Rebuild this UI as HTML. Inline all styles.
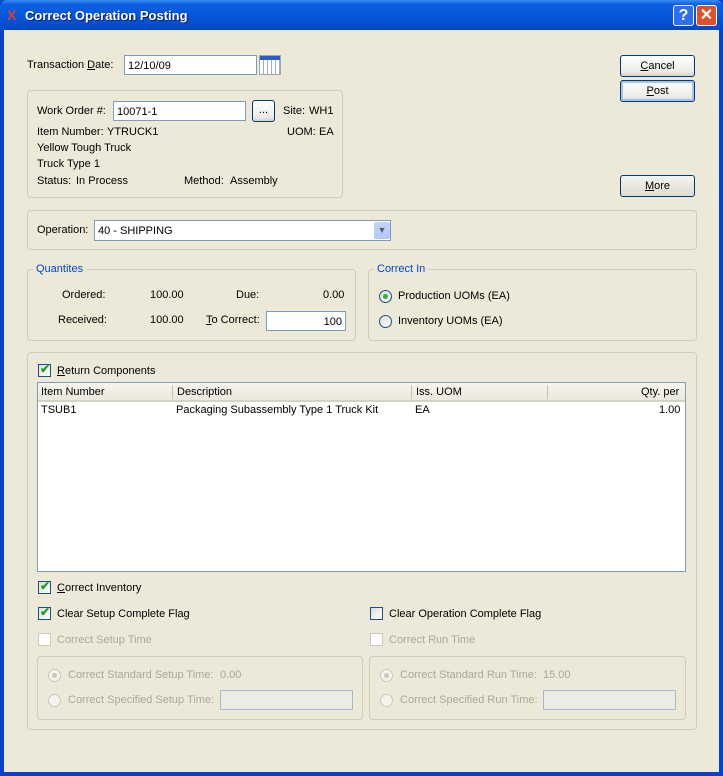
<!DOCTYPE html>
<html><head><style>
*{box-sizing:border-box;margin:0;padding:0}
body{width:723px;height:776px;background:#0842c8;font-family:"Liberation Sans",sans-serif;font-size:11px;color:#000;position:relative;overflow:hidden}
.a{position:absolute;white-space:nowrap}
#title{left:0;top:0;width:723px;height:30px;background:linear-gradient(#3c8cf5 0,#0a5fe0 15%,#0554d8 60%,#0447c4 100%);border-radius:7px 7px 0 0}
#body{left:4px;top:30px;width:715px;height:742px;background:#ece9d8}
.g{position:absolute;border:1px solid #d0cdbc;border-radius:4px}
.in{position:absolute;background:#fff;border:1px solid #7f9db9;padding:4px 3px 0;font-size:11px}
.btn{position:absolute;border:1px solid #003c74;border-radius:3px;background:linear-gradient(#fff,#ecebe6 80%,#d6d0c5);text-align:center;line-height:20px}
.cb{position:absolute;width:13px;height:13px;border:1px solid #1c5180;background:linear-gradient(135deg,#dcdcd6,#fff)}
.cb.d{border-color:#cac8bb;background:#fff}
.ck{position:absolute;left:1px;top:-3px;color:#21a121;font-size:12px;font-weight:bold}
.rb{position:absolute;width:13px;height:13px;border:1px solid #1c5180;border-radius:50%;background:linear-gradient(135deg,#dcdcd6,#fff)}
.rb.d{border-color:#cac8bb;background:#f4f3ee}
.dot{position:absolute;left:3px;top:3px;width:5px;height:5px;border-radius:50%;background:#2fb52f}
.dis{color:#aca899}
.blue{color:#0046d5}
u{text-decoration:underline}
</style></head><body>
<div id="title" class="a"></div>
<div class="a" style="left:7px;top:7px;color:#e0402a;font-weight:bold;font-size:14px">X</div>
<div class="a" style="left:25px;top:8px;color:#fff;font-weight:bold;font-size:13px;text-shadow:1px 1px #0a1e6e">Correct Operation Posting</div>
<div class="a" style="left:673px;top:5px;width:21px;height:21px;border:1px solid #fff;border-radius:3px;background:#2e6ef0;color:#fff;font-weight:bold;font-size:16px;text-align:center;line-height:19px">?</div>
<div class="a" style="left:696px;top:5px;width:21px;height:21px;border:1px solid #fff;border-radius:3px;background:#e0502a;color:#fff;font-weight:bold;font-size:16px;text-align:center;line-height:19px">✕</div>
<div id="body" class="a"></div>

<div class="a" style="left:27px;top:59px">Transaction <u>D</u>ate:</div>
<div class="in" style="left:124px;top:55px;width:133px;height:20px">12/10/09</div>
<div class="a" style="left:259px;top:55px;width:22px;height:20px;border:1px solid #9aa;background:repeating-linear-gradient(90deg,#fff 0 3px,#aab 3px 4px),#fff"><div style="height:4px;background:#2a5bd0"></div></div>

<div class="g" style="left:27px;top:90px;width:316px;height:108px"></div>
<div class="a" style="left:37px;top:105px">Work Order #:</div>
<div class="in" style="left:113px;top:101px;width:133px;height:20px">10071-1</div>
<div class="btn" style="left:252px;top:100px;width:23px;height:22px;line-height:18px">...</div>
<div class="a" style="left:283px;top:105px">Site:</div><div class="a" style="left:309px;top:105px">WH1</div>
<div class="a" style="left:37px;top:126px">Item Number:</div><div class="a" style="left:107px;top:126px">YTRUCK1</div>
<div class="a" style="left:287px;top:126px">UOM:</div><div class="a" style="left:319px;top:126px">EA</div>
<div class="a" style="left:37px;top:142px">Yellow Tough Truck</div>
<div class="a" style="left:37px;top:158px">Truck Type 1</div>
<div class="a" style="left:37px;top:175px">Status:</div><div class="a" style="left:76px;top:175px">In Process</div>
<div class="a" style="left:184px;top:175px">Method:</div><div class="a" style="left:230px;top:175px">Assembly</div>

<div class="btn" style="left:620px;top:55px;width:75px;height:22px"><u>C</u>ancel</div>
<div class="btn" style="left:620px;top:80px;width:75px;height:22px;box-shadow:inset 0 0 0 2px #a8c4f0"><u>P</u>ost</div>
<div class="btn" style="left:620px;top:175px;width:75px;height:22px;background:linear-gradient(#f4f3ee,#e0ddd0)"><u>M</u>ore</div>

<div class="g" style="left:27px;top:210px;width:670px;height:40px"></div>
<div class="a" style="left:37px;top:224px">Operation:</div>
<div class="in" style="left:94px;top:220px;width:297px;height:21px">40 - SHIPPING</div>
<div class="a" style="left:374px;top:222px;width:16px;height:17px;border-radius:2px;background:linear-gradient(#c5d5fb,#b2c8f5);color:#4d6185;font-size:9px;text-align:center;line-height:17px">▼</div>

<div class="g" style="left:27px;top:269px;width:329px;height:72px"></div>
<div class="a blue" style="left:33px;top:263px;background:#ece9d8;padding:0 3px">Quantites</div>
<div class="a" style="left:62px;top:289px">Ordered:</div><div class="a" style="left:150px;top:289px">100.00</div>
<div class="a" style="left:236px;top:289px">Due:</div><div class="a" style="left:323px;top:289px">0.00</div>
<div class="a" style="left:58px;top:314px">Received:</div><div class="a" style="left:150px;top:314px">100.00</div>
<div class="a" style="left:206px;top:314px"><u>T</u>o Correct:</div>
<div class="in" style="left:266px;top:311px;width:80px;height:20px;text-align:right">100</div>

<div class="g" style="left:368px;top:269px;width:329px;height:72px"></div>
<div class="a blue" style="left:374px;top:263px;background:#ece9d8;padding:0 3px">Correct In</div>
<div class="rb" style="left:379px;top:290px"><div class="dot"></div></div><div class="a" style="left:398px;top:290px">Production UOMs (EA)</div>
<div class="rb" style="left:379px;top:315px"></div><div class="a" style="left:398px;top:315px">Inventory UOMs (EA)</div>

<div class="g" style="left:27px;top:352px;width:670px;height:378px"></div>
<div class="cb" style="left:38px;top:364px"><span class="ck">✔</span></div><div class="a" style="left:57px;top:365px"><u>R</u>eturn Components</div>
<div class="a" style="left:37px;top:382px;width:649px;height:190px;border:1px solid #7f9db9;background:#fff"></div>
<div class="a" style="left:38px;top:383px;width:647px;height:19px;background:linear-gradient(#f6f5ef,#ebe9dc);border-bottom:2px solid #d6d2c2"></div>
<div class="a" style="left:172px;top:385px;width:1px;height:14px;background:#c7c5b2"></div>
<div class="a" style="left:411px;top:385px;width:1px;height:14px;background:#c7c5b2"></div>
<div class="a" style="left:547px;top:385px;width:1px;height:14px;background:#c7c5b2"></div>
<div class="a" style="left:41px;top:386px">Item Number</div>
<div class="a" style="left:177px;top:386px">Description</div>
<div class="a" style="left:416px;top:386px">Iss. UOM</div>
<div class="a" style="left:641px;top:386px">Qty. per</div>
<div class="a" style="left:41px;top:404px">TSUB1</div>
<div class="a" style="left:176px;top:404px">Packaging Subassembly Type 1 Truck Kit</div>
<div class="a" style="left:415px;top:404px">EA</div>
<div class="a" style="left:659px;top:404px">1.00</div>

<div class="cb" style="left:38px;top:581px"><span class="ck">✔</span></div><div class="a" style="left:57px;top:582px"><u>C</u>orrect Inventory</div>
<div class="cb" style="left:38px;top:607px"><span class="ck">✔</span></div><div class="a" style="left:57px;top:608px">Clear Setup Complete Flag</div>
<div class="cb" style="left:370px;top:607px"></div><div class="a" style="left:389px;top:608px">Clear Operation Complete Flag</div>
<div class="cb d" style="left:38px;top:633px"></div><div class="a dis" style="left:57px;top:634px">Correct Setup Time</div>
<div class="cb d" style="left:370px;top:633px"></div><div class="a dis" style="left:389px;top:634px">Correct Run Time</div>

<div class="g" style="left:37px;top:656px;width:326px;height:64px"></div>
<div class="rb d" style="left:48px;top:669px"><div class="dot" style="background:#cac8bb"></div></div><div class="a dis" style="left:68px;top:669px">Correct Standard Setup Time:</div><div class="a dis" style="left:220px;top:669px">0.00</div>
<div class="rb d" style="left:48px;top:694px"></div><div class="a dis" style="left:68px;top:694px">Correct Specified Setup Time:</div>
<div class="in" style="left:220px;top:690px;width:133px;height:20px;background:#ecebe5;border-color:#a8b8cc"></div>

<div class="g" style="left:369px;top:656px;width:317px;height:64px"></div>
<div class="rb d" style="left:380px;top:669px"><div class="dot" style="background:#cac8bb"></div></div><div class="a dis" style="left:400px;top:669px">Correct Standard Run Time:</div><div class="a dis" style="left:543px;top:669px">15.00</div>
<div class="rb d" style="left:380px;top:694px"></div><div class="a dis" style="left:400px;top:694px">Correct Specified Run Time:</div>
<div class="in" style="left:543px;top:690px;width:133px;height:20px;background:#ecebe5;border-color:#a8b8cc"></div>
</body></html>
